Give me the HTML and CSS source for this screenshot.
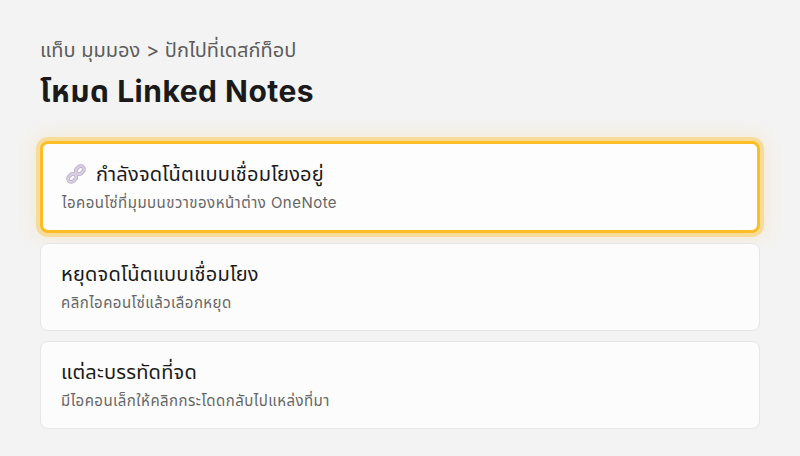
FILE: index.html
```html
<!DOCTYPE html>
<html lang="th">
<head>
<meta charset="utf-8">
<title>Linked Notes</title>
<link rel="stylesheet" href="styles.css">
</head>
<body>
<main class="page">
<p class="crumb">แท็บ มุมมอง &gt; ปักไปที่เดสก์ท็อป</p>
<h1 class="title">โหมด Linked Notes</h1>
<ul class="cards">
<li class="card active">
<div class="head"><svg class="chain" viewBox="0 0 22 22" aria-hidden="true"><g fill="none" stroke-linecap="round"><rect class="link-edge" x="-4.5" y="-3.2" width="9" height="6.4" rx="3.2" transform="translate(7.2 14.8) rotate(-45)"/><rect class="link-edge" x="-4.5" y="-3.2" width="9" height="6.4" rx="3.2" transform="translate(14.8 7.2) rotate(-45)"/><rect class="link-fill" x="-4.5" y="-3.2" width="9" height="6.4" rx="3.2" transform="translate(7.2 14.8) rotate(-45)"/><rect class="link-fill" x="-4.5" y="-3.2" width="9" height="6.4" rx="3.2" transform="translate(14.8 7.2) rotate(-45)"/></g></svg><span>กำลังจดโน้ตแบบเชื่อมโยงอยู่</span></div>
<div class="sub">ไอคอนโซ่ที่มุมบนขวาของหน้าต่าง OneNote</div>
</li>
<li class="card">
<div class="head">หยุดจดโน้ตแบบเชื่อมโยง</div>
<div class="sub">คลิกไอคอนโซ่แล้วเลือกหยุด</div>
</li>
<li class="card">
<div class="head">แต่ละบรรทัดที่จด</div>
<div class="sub">มีไอคอนเล็กให้คลิกกระโดดกลับไปแหล่งที่มา</div>
</li>
</ul>
</main>
</body>
</html>
```
FILE: styles.css
```css
* { box-sizing: border-box; }
html, body { margin: 0; padding: 0; }
body { width: 800px; height: 456px; background: #f3f3f3; overflow: hidden; font-family: Inter, "Noto Sans Thai", sans-serif; color: #1a1a1a; }
.page { padding: 37px 40px 0; }
.crumb { margin: 0; font-size: 20px; line-height: 26px; color: #5c5c5c; }
.title { margin: 8px 0 0; font-size: 30px; line-height: 40px; font-weight: 700; letter-spacing: .5px; }
.cards { list-style: none; margin: 30px 0 0; padding: 0; display: flex; flex-direction: column; gap: 10px; }
.card { background: #fcfcfc; border: 1px solid #e6e6e6; border-radius: 8px; padding: 16px 20px; height: 88px; }
.card.active { height: 92px; border: 3px solid #fdbd26; box-shadow: 0 0 0 4px rgba(253,189,38,.38), 0 0 18px 6px rgba(253,189,38,.14); padding: 16px 19px; background: #fdfdfd; }
.head { font-size: 20px; line-height: 28px; letter-spacing: .22px; display: flex; gap: 9px; align-items: center; }
.chain { width: 22px; height: 22px; margin-left: 3px; }
.link-edge { stroke: #b3a6c3; stroke-width: 3.6; }
.link-fill { stroke: #d9d0e3; stroke-width: 2.2; }
.sub { margin-top: 5px; font-size: 15px; line-height: 20px; letter-spacing: .47px; color: #666; }
```
